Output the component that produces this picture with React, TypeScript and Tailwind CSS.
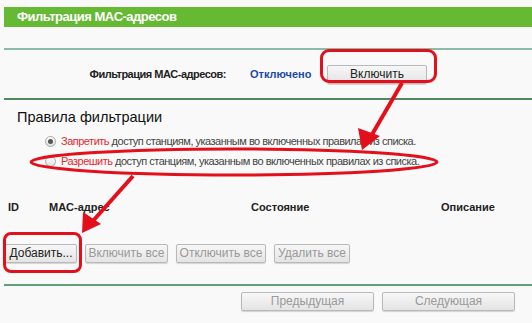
const btn =
  "h-[19px] border border-[#b9b9b9] rounded-[2px] bg-gradient-to-b from-[#f7f7f7] to-[#e4e4e4] text-[12px] leading-[17px] shadow-[0_1px_1px_rgba(0,0,0,0.15)]";

export default function App() {
  return (
    <div
      className="relative w-[532px] h-[323px] overflow-hidden bg-[#f9f9f9] text-[#333]"
      style={{ fontFamily: '"Liberation Sans", Arial, sans-serif' }}
    >
      <div className="pt-[7px] pl-[4px]">
        <div className="h-[20px] bg-[#66b933] pl-[13px] text-[13px] font-bold leading-[20px] tracking-[-0.5px] text-white">
          Фильтрация MAC-адресов
        </div>
        <div className="mt-[21px] h-[2px] bg-[#8bbca7]" />

        <div className="flex h-[48px] items-center">
          <div className="w-[222px] text-right text-[11px] font-bold tracking-[-0.5px] text-[#222]">
            Фильтрация MAC-адресов:
          </div>
          <div className="ml-[24px] w-[77px] text-[11px] font-bold text-[#1a4aa8]">
            Отключено
          </div>
          <button className={`${btn} w-[100px] text-[#222]`}>Включить</button>
        </div>
        <div className="h-[2px] bg-[#4f8a5d]" />

        <div className="mt-[8px] pl-[13px] text-[14.5px] leading-[18px] text-[#111]">
          Правила фильтрации
        </div>

        <div className="mt-[8px] flex flex-col gap-[6px] pl-[41px] text-[11px] leading-[14px] tracking-[-0.5px] text-[#444]">
          <label className="flex items-center gap-[5px]">
            <span className="flex h-[11px] w-[11px] items-center justify-center rounded-full border border-[#aaa] bg-gradient-to-b from-[#fff] to-[#ddd]">
              <span className="h-[5px] w-[5px] rounded-full bg-[#555]" />
            </span>
            <span>
              <span className="text-[#e8282e]">Запретить</span> доступ станциям, указанным во
              включенных правилах из списка.
            </span>
          </label>
          <label className="flex items-center gap-[5px]">
            <span className="h-[11px] w-[11px] rounded-full border border-[#aaa] bg-gradient-to-b from-[#fff] to-[#ddd]" />
            <span>
              <span className="text-[#e8282e]">Разрешить</span> доступ станциям, указанным во
              включенных правилах из списка.
            </span>
          </label>
        </div>

        <div className="mt-[32px] flex text-[11px] font-bold leading-[14px] text-[#222]">
          <div className="w-[45px] pl-[4px]">ID</div>
          <div className="w-[202px]">MAC-адрес</div>
          <div className="w-[190px]">Состояние</div>
          <div>Описание</div>
        </div>

        <div className="mt-[30px] flex gap-[8px] pl-[1px]">
          <button className={`${btn} w-[72px] text-[#222]`}>Добавить...</button>
          <button className={`${btn} w-[83px] text-[#999]`}>Включить все</button>
          <button className={`${btn} w-[90px] text-[#999]`}>Отключить все</button>
          <button className={`${btn} w-[76px] text-[#999]`}>Удалить все</button>
        </div>

        <div className="mt-[21px] h-[2px] bg-[#5fa277]" />

        <div className="mt-[6px] flex gap-[8px] pl-[237px]">
          <button className={`${btn} w-[133px] text-[#999]`}>Предыдущая</button>
          <button className={`${btn} w-[133px] text-[#999]`}>Следующая</button>
        </div>
      </div>

      {/* annotations */}
      <div className="absolute left-[320px] top-[49px] h-[34px] w-[117px] rounded-[9px] border-[3px] border-[#e3101c]" />
      <div className="absolute left-[3px] top-[232px] h-[41px] w-[79px] rounded-[8px] border-[3px] border-[#e3101c]" />
      <svg className="absolute left-0 top-0" width="532" height="323">
        <ellipse cx="234" cy="162" rx="203" ry="13" fill="none" stroke="#e3101c" strokeWidth="3" />
        <line x1="402" y1="83" x2="370" y2="138" stroke="#e3101c" strokeWidth="4" />
        <polygon points="362,150 358,128 380,136" fill="#e3101c" />
        <line x1="133" y1="176" x2="92" y2="222" stroke="#e3101c" strokeWidth="4" />
        <polygon points="82,233 83,212 101,224" fill="#e3101c" />
      </svg>
    </div>
  );
}
